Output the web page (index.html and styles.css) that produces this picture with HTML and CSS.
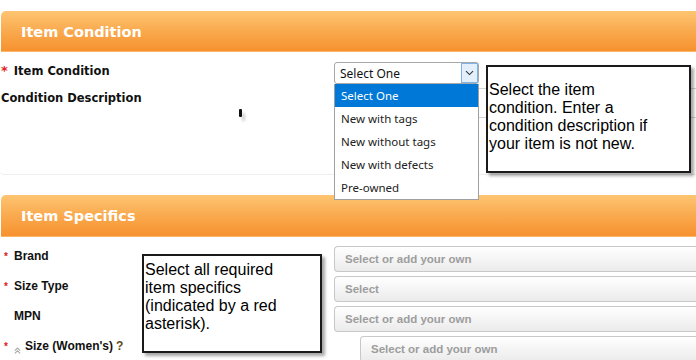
FILE: index.html
```html
<!DOCTYPE html>
<html lang="en">
<head>
    <meta charset="UTF-8">
    <meta name="viewport" content="width=device-width, initial-scale=1.0">
    <title>Item Condition</title>
    <link rel="stylesheet" href="styles.css">
</head>
<body>
    <div class="page">
        <div class="panel">
            <div class="panel-head">Item Condition</div>
            <div class="panel-body cond-body">
                <div class="row row-select">
                    <div class="label cond-label"><span class="req">*</span> Item Condition</div>
                    <div class="field">
                        <div class="select">
                            <span>Select One</span>
                            <span class="select-btn">
                                <svg width="9" height="6" viewBox="0 0 9 6"><path d="M1 1.2 L4.5 4.6 L8 1.2" fill="none" stroke="#333" stroke-width="1.1"/></svg>
                            </span>
                        </div>
                        <ul class="options">
                            <li class="selected">Select One</li>
                            <li>New with tags</li>
                            <li>New without tags</li>
                            <li>New with defects</li>
                            <li>Pre-owned</li>
                        </ul>
                    </div>
                </div>
                <div class="row row-desc">
                    <div class="label cond-label">Condition Description</div>
                    <div class="field">
                        <div class="textarea"></div>
                    </div>
                </div>
                <div class="callout callout-cond">Select the item<br>condition. Enter a<br>condition description if<br>your item is not new.</div>
                <span class="cursor"></span>
            </div>
        </div>

        <div class="panel panel-specs">
            <div class="panel-head">Item Specifics</div>
            <div class="panel-body specs-body">
                <div class="row spec-row">
                    <div class="label spec-label"><span class="req small">*</span>Brand</div>
                    <div class="field"><div class="combo">Select or add your own</div></div>
                </div>
                <div class="row spec-row">
                    <div class="label spec-label"><span class="req small">*</span>Size Type</div>
                    <div class="field"><div class="combo">Select</div></div>
                </div>
                <div class="row spec-row">
                    <div class="label spec-label"><span class="req small blank">*</span>MPN</div>
                    <div class="field"><div class="combo">Select or add your own</div></div>
                </div>
                <div class="row spec-row">
                    <div class="label spec-label"><span class="req small">*</span><svg class="chev" width="7" height="7" viewBox="0 0 7 7"><path d="M0.8 3.6 L3.5 1 L6.2 3.6 M0.8 6.4 L3.5 3.8 L6.2 6.4" fill="none" stroke="#aaa" stroke-width="1.1"/></svg>Size (Women's) <span class="help">?</span></div>
                    <div class="field indent"><div class="combo">Select or add your own</div></div>
                </div>
                <div class="callout callout-specs">Select all required<br>item specifics<br>(indicated by a red<br>asterisk).</div>
            </div>
        </div>
    </div>
</body>
</html>
```

FILE: styles.css
```css
body {
    margin: 0;
    background: white;
    font-family: "DejaVu Sans", Verdana, sans-serif;
}
.page {
    width: 696px;
    height: 360px;
    overflow: hidden;
    padding-top: 11px;
    box-sizing: border-box;
}
.panel-head {
    margin-left: 1px;
    height: 41px;
    line-height: 42px;
    padding-left: 20px;
    border-radius: 5px 0 0 0;
    background: linear-gradient(#fec572, #f9a74b 55%, #f7922f);
    border-bottom: 1px solid #fbb46a;
    box-sizing: border-box;
    color: white;
    font-size: 14.5px;
    font-weight: bold;
}
.panel-body {
    position: relative;
}
.cond-body {
    height: 122px;
    border-bottom: 1px solid #eeeeee;
    border-radius: 0 0 0 4px;
}
.panel-specs {
    margin-top: 20px;
}
.panel-specs .panel-head {
    height: 42px;
}
.row {
    display: grid;
    grid-template-columns: 334px 1fr;
}
.label {
    font-weight: bold;
    color: #111;
}
.cond-label {
    font-size: 11.5px;
    padding-left: 1px;
}
.row-select {
    padding-top: 10px;
    align-items: start;
}
.row-select .label {
    padding-top: 1px;
}
.row-select .req {
    font-size: 13px;
    margin-right: 2px;
}
.row-desc {
    margin-top: 4px;
}
.row-desc .label {
    padding-top: 3px;
}
.req {
    color: #e02020;
}
.field {
    position: relative;
}
.select {
    width: 145px;
    height: 22px;
    box-sizing: border-box;
    border: 1px solid #a8a8a8;
    border-radius: 3px;
    display: flex;
    align-items: center;
    justify-content: space-between;
    padding-left: 5px;
    font-family: "Noto Sans", sans-serif;
    font-size: 12px;
    color: #111;
}
.select-btn {
    width: 17px;
    height: 20px;
    box-sizing: border-box;
    background: #e3effb;
    border: 1px solid #7fb3e6;
    display: flex;
    align-items: center;
    justify-content: center;
}
.options {
    position: absolute;
    left: 0;
    top: 22px;
    width: 145px;
    margin: 0;
    padding: 0;
    list-style: none;
    box-sizing: border-box;
    border: 1px solid #a0a0a0;
    border-top: none;
    background: white;
    z-index: 2;
    font-family: "Noto Sans", sans-serif;
    font-size: 11.5px;
    color: #222;
}
.options li {
    height: 23px;
    line-height: 23px;
    padding-left: 6px;
}
.options li.selected {
    background: #0078d7;
    color: white;
}
.textarea {
    height: 30px;
    box-sizing: border-box;
    border-top: 1px solid #d4d4d4;
    border-bottom: 1px solid #d4d4d4;
    border-left: 1px solid #d4d4d4;
}
.callout {
    position: absolute;
    box-sizing: border-box;
    border: 2px solid #1a1a1a;
    background: white;
    box-shadow: 3px 3px 3px rgba(0, 0, 0, 0.35);
    font-family: "Liberation Sans", Arial, sans-serif;
    font-size: 16px;
    line-height: 18px;
    color: #000;
    z-index: 3;
    white-space: nowrap;
}
.callout-cond {
    left: 486px;
    top: 13px;
    width: 205px;
    height: 108px;
    padding: 14px 4px 0 1px;
}
.callout-specs {
    left: 142px;
    top: 17px;
    width: 180px;
    height: 99px;
    padding: 5px 4px 0 1px;
}
.cursor {
    position: absolute;
    left: 239px;
    top: 57px;
    width: 3px;
    height: 8px;
    background: #111;
    border-radius: 1px;
    box-shadow: 3px 4px 3px rgba(0, 0, 0, 0.2);
}
.specs-body {
    padding-top: 9px;
}
.spec-row {
    margin-bottom: 4px;
}
.spec-label {
    font-family: "Liberation Sans", Arial, sans-serif;
    font-size: 12px;
    padding-left: 4px;
    padding-top: 3px;
    display: flex;
    align-items: baseline;
}
.req.small {
    font-size: 10px;
    width: 10px;
}
.req.blank {
    visibility: hidden;
}
.chev {
    margin-right: 4px;
    align-self: center;
}
.help {
    color: #5b4a1c;
    margin-left: 3px;
}
.combo {
    height: 26px;
    box-sizing: border-box;
    border: 1px solid #c8c8c8;
    border-right: none;
    border-radius: 4px 0 0 4px;
    background: linear-gradient(#ffffff, #f3f3f3 60%, #ebebeb);
    padding-left: 10px;
    line-height: 24px;
    font-family: "Liberation Sans", Arial, sans-serif;
    font-size: 11.5px;
    font-weight: bold;
    color: #9d9d9d;
}
.indent {
    margin-left: 26px;
}
```
